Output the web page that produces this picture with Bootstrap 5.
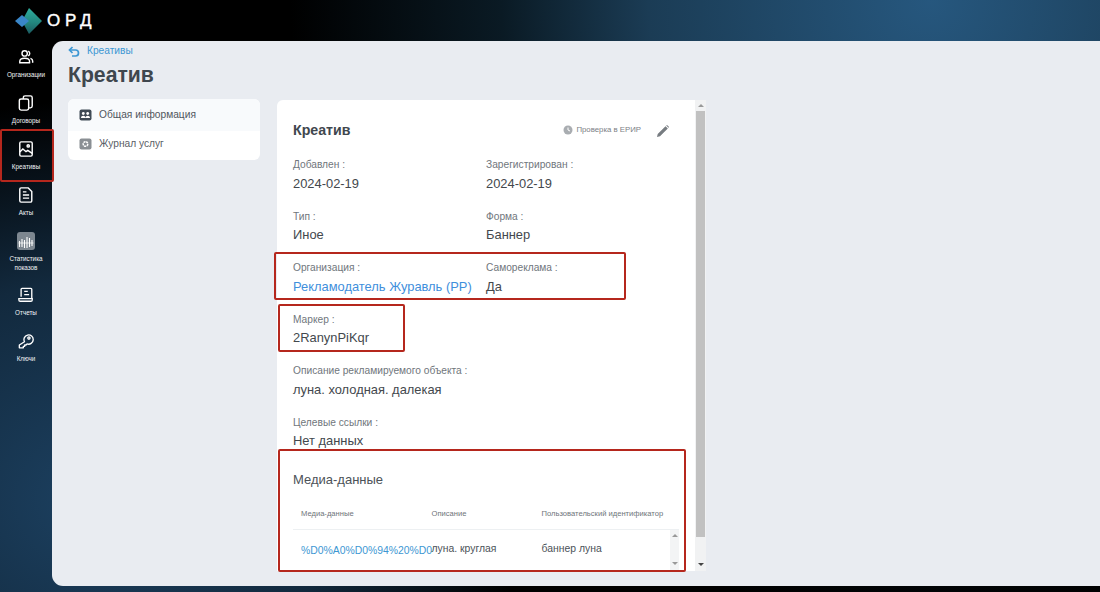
<!DOCTYPE html>
<html lang="ru">
<head>
<meta charset="utf-8">
<title>ОРД</title>
<link href="https://cdn.jsdelivr.net/npm/bootstrap@5.3.0/dist/css/bootstrap.min.css" rel="stylesheet">
<style>
html,body{height:592px;overflow:hidden}
body{font-family:"Liberation Sans",Arial,sans-serif;color:#3d4349;
 background:radial-gradient(ellipse 640px 620px at 930px 0px,#26577e 0%,#1b3c55 44%,#0a1a24 67%,rgba(0,0,0,0) 100%),radial-gradient(ellipse 430px 400px at 90px 500px,#1c4060 0%,#12293d 55%,rgba(0,0,0,0) 100%),#000;}
.topline{height:41px;padding-left:15px}
.brand-name{color:#fff;font-size:17px;letter-spacing:4.800px;margin-left:4px;line-height:1;font-weight:400;-webkit-text-stroke:.4px #fff}
.shell{height:545px}
.rail{width:52px;flex:none;padding-top:3px;color:#fff}
.rail-item{height:46px;width:52px;font-size:6.300px;line-height:8.500px;text-align:center;padding-top:5px;color:#f1f4f6}
.rail-item svg{display:block;margin:0 auto 6px;width:16px;height:16px}
.rail-tall{height:53.500px}
.rail-tall svg{width:18px;height:18px;margin-top:-1px;margin-bottom:5px}
.panel{flex:1;background:#e9ecf1;border-radius:11px 0 0 11px;padding:0 16px;min-width:0;position:relative}
.crumb{font-size:10.200px;color:#3d97d3;height:18px;padding-top:2px}
.crumb-txt{margin-left:-1px}
.page-title{font-size:21.200px;font-weight:700;color:#3f474e;margin:0;height:40px;line-height:32px}
.menu-box{width:192px;height:61px;background:#fff;border-radius:6px;overflow:hidden;font-size:10.200px;color:#5a6066;flex:none}
.menu-row{height:26px;padding-left:11px;gap:7px}
.menu-on{height:32px;background:#f8fafc;color:#50565c}
.sheet{width:429px;height:471px;background:#fff;border-radius:6px 0 0 0;margin-left:17px;margin-top:1px;overflow:hidden;flex:none}
.sheet-body{flex:1;min-width:0;padding:0 16px;overflow:hidden}
.sheet-head{height:57px;padding-top:20px;padding-right:9px}
.sheet-title{font-size:14.200px;font-weight:700;color:#3f474e}
.erip{font-size:7.800px;color:#7b8085;gap:3px;margin-right:15px}
.fld-row{height:51.500px}
.fld{width:193px;flex:none}
.fld-lab{font-size:10.200px;line-height:14px;color:#70767c;padding-top:1px}
.fld-val{font-size:12.900px;line-height:18px;color:#43484d;margin-top:2.500px;white-space:nowrap}
.fld-val a{color:#3f8fdc;text-decoration:none}
.fld-last{height:37.500px}
.media-head{font-size:13px;color:#4c5258;margin-top:7px;height:42px}
.tbl-head{font-size:7.600px;color:#6e7479;height:29px;border-bottom:1px solid #edf0f2;padding-left:8px;padding-bottom:3px;width:386px}
.tbl-row{height:40px;width:386px;padding-left:8px;font-size:10.400px;color:#4c5258}
.tbl-txt{position:relative;top:-1px}
.c1{width:130.500px;flex:none;white-space:nowrap}
.c2{width:110px;flex:none}
.lnk{color:#3d97d3;position:relative;top:1px}
.mini-track{width:9px;height:40px;background:#f3f4f5;flex:none;margin-left:auto;position:relative}
.bar-track{width:11px;background:#f1f2f3;flex:none;position:relative}
.bar-thumb{position:absolute;left:1px;right:1px;top:11px;height:426px;background:#c1c1c1}
.arr-up,.arr-dn{position:absolute;left:50%;margin-left:-3px;width:0;height:0;border-left:3px solid transparent;border-right:3px solid transparent}
.arr-up{top:4px;border-bottom:3px solid #999}
.mini-track .arr-dn{border-top-color:#999}
.arr-dn{bottom:5px;border-top:3px solid #444}
.mark-box{position:absolute;border:2px solid #b5271d;border-radius:2px;pointer-events:none}
.mk-rail{left:-52px;top:88px;width:54px;height:53px}
.mk-org{left:222px;top:211px;width:352px;height:48px}
.mk-mark{left:226px;top:263px;width:127px;height:48px}
.mk-media{left:226px;top:408px;width:408px;height:123px}
</style>
</head>
<body>
<div class="topline d-flex align-items-center">
 <svg width="28" height="28" viewBox="0 0 28 28">
  <defs><linearGradient id="tealg" x1="0" y1="0" x2="0" y2="1"><stop offset="0" stop-color="#2fae9e"/><stop offset=".55" stop-color="#23877f"/><stop offset="1" stop-color="#1b5a60"/></linearGradient></defs>
  <polygon points="14,1 27,14 14,27 7,14" fill="url(#tealg)"/>
  <polygon points="7,8 14,14 7,20 0,14" fill="#3a86c8"/>
 </svg>
 <span class="brand-name">ОРД</span>
</div>
<div class="shell d-flex">
 <nav class="rail">
  <div class="rail-item"><svg viewBox="0 0 18 18" fill="none" stroke="#fff" stroke-width="1.600"><circle cx="7.500" cy="5" r="3"/><path d="M2 15.500v-1.500c0-2.500 2.500-3.500 5.500-3.500s5.500 1 5.500 3.500v1.500z"/><path d="M11.500 2.300a3 3 0 0 1 0 5.400M14 10.500c1.500.5 2.500 1.500 2.500 3v2"/></svg>Организации</div>
  <div class="rail-item"><svg viewBox="0 0 18 18" fill="none" stroke="#fff" stroke-width="1.600"><rect x="1.500" y="4.500" width="10.500" height="12.500" rx="2"/><path d="M6 4.500V3a2 2 0 0 1 2-2h6a2 2 0 0 1 2 2v9.500a2 2 0 0 1-2 2h-2"/></svg>Договоры</div>
  <div class="rail-item"><svg viewBox="0 0 18 18" fill="none" stroke="#fff" stroke-width="1.600"><rect x="2" y="1" width="14" height="16" rx="1.500"/><circle cx="11.500" cy="5.500" r="1.300"/><path d="M2 12.500l3.500-3.500 3.500 3 2-1.500 5 3.500"/></svg>Креативы</div>
  <div class="rail-item"><svg viewBox="0 0 18 18" fill="none" stroke="#fff" stroke-width="1.600"><path d="M3.500 1h8l4 4v10.500a1.500 1.500 0 0 1-1.500 1.500H3.500A1.500 1.500 0 0 1 2 15.500V2.500A1.500 1.500 0 0 1 3.500 1z"/><path d="M5.500 5.500h4M5.500 9h7M5.500 12.500h7"/></svg>Акты</div>
  <div class="rail-item rail-tall"><svg viewBox="0 0 18 18"><rect x="0" y="0" width="18" height="18" rx="3" fill="#7d8790"/><path d="M2.500 9v6M5 7v8M7.500 8v8M10 5v11M12.500 6v9M15 8v6" stroke="#fff" stroke-width="1.100"/><path d="M1.500 11h15" stroke="#fff" stroke-width=".7"/></svg>Статистика<br>показов</div>
  <div class="rail-item"><svg viewBox="0 0 18 18" fill="none" stroke="#fff" stroke-width="1.500"><path d="M3.500 11V2.500a1 1 0 0 1 1-1h10a1 1 0 0 1 1 1V13"/><path d="M1 13h15v1.500a1.500 1.500 0 0 1-1.500 1.500h-12A1.500 1.500 0 0 1 1 14.500z"/><path d="M7 5h4M7 8.500h5.500"/></svg>Отчеты</div>
  <div class="rail-item"><svg viewBox="0 0 18 18" fill="none" stroke="#fff" stroke-width="1.500"><path d="M7.300 9.800a5.200 5.200 0 1 1 2.900 2.500l-1.200 1.200H7.500V15H6v1.700H1.500v-3.200z" stroke-linejoin="round"/><circle cx="12.300" cy="5.700" r="1.300"/></svg>Ключи</div>
 </nav>
 <main class="panel">
  <div class="crumb d-flex align-items-center gap-2">
   <svg width="12" height="11" viewBox="0 0 12 11" fill="none" stroke="#3d97d3" stroke-width="1.700"><path d="M4.500 1L1.500 4l3 3"/><path d="M2 4h5.500a3 3 0 0 1 0 6H4"/></svg>
   <span class="crumb-txt">Креативы</span>
  </div>
  <h1 class="page-title">Креатив</h1>
  <div class="d-flex align-items-start">
   <div class="menu-box">
    <div class="menu-row menu-on d-flex align-items-center">
     <svg width="13" height="12" viewBox="0 0 13 12"><rect width="12" height="11" x=".5" y=".5" rx="2" fill="#3f4a55"/><circle cx="4.300" cy="4.500" r="1.400" fill="#fff"/><circle cx="8.700" cy="4.500" r="1.400" fill="#fff"/><path d="M2 9c0-1.500 1-2.200 2.300-2.200S6.500 7.500 6.500 9zM6.500 9c0-1.500 1-2.200 2.200-2.200S11 7.500 11 9z" fill="#fff"/></svg>
     <span>Общая информация</span>
    </div>
    <div class="menu-row d-flex align-items-center">
     <svg width="13" height="12" viewBox="0 0 13 12"><rect width="12" height="11" x=".5" y=".5" rx="2" fill="#8a8f94"/><circle cx="6.500" cy="6" r="2.300" fill="none" stroke="#fff" stroke-width="1.500" stroke-dasharray="2 .6"/></svg>
     <span>Журнал услуг</span>
    </div>
   </div>
   <section class="sheet d-flex">
    <div class="sheet-body">
     <div class="sheet-head d-flex align-items-start">
      <div class="sheet-title">Креатив</div>
      <div class="erip d-flex align-items-center ms-auto pt-1">
       <svg width="10" height="10" viewBox="0 0 10 10"><circle cx="5" cy="5" r="4.500" fill="#a9adb1"/><path d="M5 2.500V5l2 1" stroke="#fff" fill="none"/></svg>
       <span>Проверка в ЕРИР</span>
      </div>
      <svg class="mt-1" width="14" height="14" viewBox="0 0 14 14"><path d="M1 13l.7-3L9.500 2.200l2.300 2.300L4 12.300zM10.200 1.500l.8-.6 2.100 2.100-.6.800z" fill="#777c81"/></svg>
     </div>
     <div class="fld-row d-flex">
      <div class="fld"><div class="fld-lab">Добавлен :</div><div class="fld-val">2024-02-19</div></div>
      <div class="fld"><div class="fld-lab">Зарегистрирован :</div><div class="fld-val">2024-02-19</div></div>
     </div>
     <div class="fld-row d-flex">
      <div class="fld"><div class="fld-lab">Тип :</div><div class="fld-val">Иное</div></div>
      <div class="fld"><div class="fld-lab">Форма :</div><div class="fld-val">Баннер</div></div>
     </div>
     <div class="fld-row d-flex">
      <div class="fld"><div class="fld-lab">Организация :</div><div class="fld-val"><a href="#">Рекламодатель Журавль (РР)</a></div></div>
      <div class="fld"><div class="fld-lab">Самореклама :</div><div class="fld-val">Да</div></div>
     </div>
     <div class="fld-row"><div class="fld-lab">Маркер :</div><div class="fld-val">2RanynPiKqr</div></div>
     <div class="fld-row"><div class="fld-lab">Описание рекламируемого объекта :</div><div class="fld-val">луна. холодная. далекая</div></div>
     <div class="fld-row fld-last"><div class="fld-lab">Целевые ссылки :</div><div class="fld-val">Нет данных</div></div>
     <div class="media-head d-flex align-items-center">Медиа-данные</div>
     <div class="tbl-head d-flex align-items-center">
      <div class="c1">Медиа-данные</div><div class="c2">Описание</div><div>Пользовательский идентификатор</div>
     </div>
     <div class="tbl-row d-flex align-items-center">
      <div class="c1 lnk">%D0%A0%D0%94%20%D0</div><div class="c2 tbl-txt">луна. круглая</div><div class="tbl-txt">баннер луна</div>
      <div class="mini-track"><span class="arr-up"></span><span class="arr-dn"></span></div>
     </div>
    </div>
    <div class="bar-track"><span class="arr-up"></span><div class="bar-thumb"></div><span class="arr-dn"></span></div>
   </section>
  </div>
  <span class="mark-box mk-rail"></span>
  <span class="mark-box mk-org"></span>
  <span class="mark-box mk-mark"></span>
  <span class="mark-box mk-media"></span>
 </main>
</div>
<script src="https://cdn.jsdelivr.net/npm/bootstrap@5.3.0/dist/js/bootstrap.bundle.min.js"></script>
</body>
</html>
